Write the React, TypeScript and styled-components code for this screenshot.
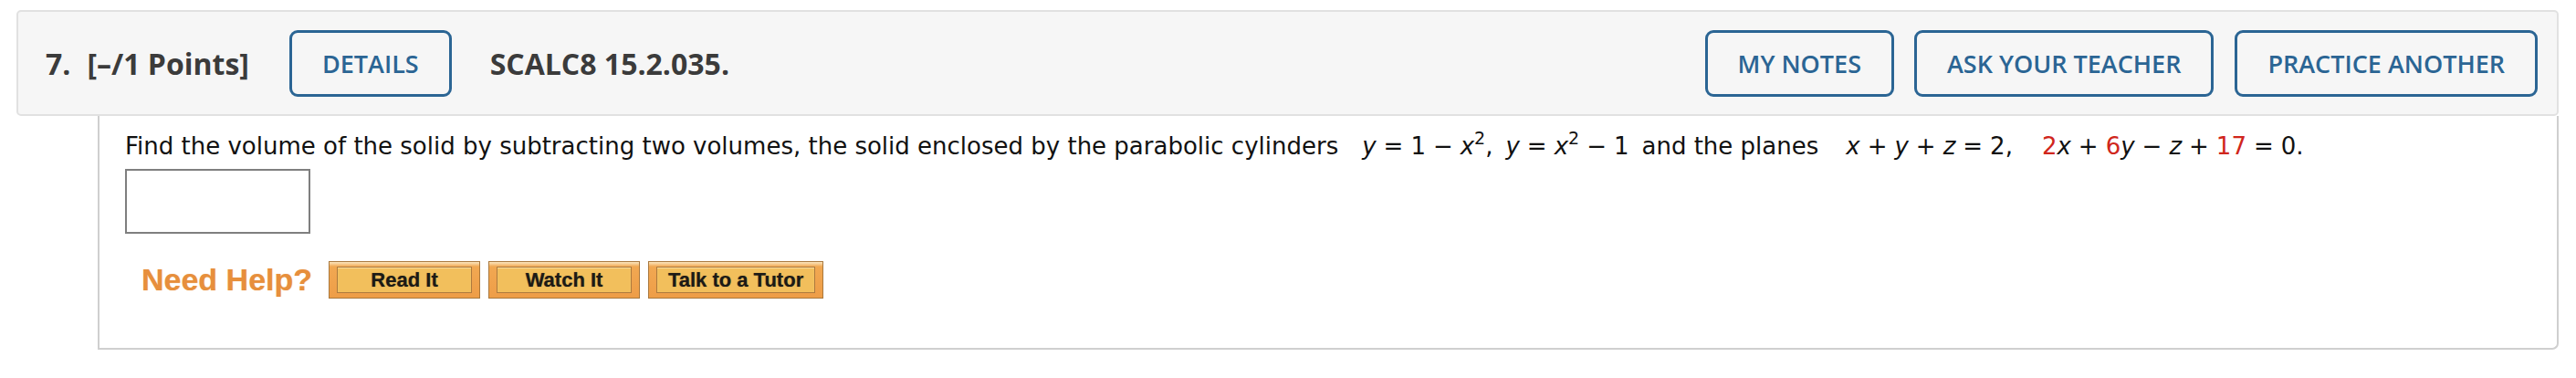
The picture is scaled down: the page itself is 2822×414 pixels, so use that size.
import React from "react";
import styled, {createGlobalStyle} from "styled-components";

const GlobalStyle = createGlobalStyle`
  html, body {
    margin: 0;
    padding: 0;
    background: #ffffff;
  }
  body {
    font-family: "Open Sans", "Liberation Sans", sans-serif;
  }
`;

const Page = styled.div`
  padding: 11px 19px 0 18px;
`;

const Header = styled.div`
  display: flex;
  align-items: center;
  justify-content: space-between;
  height: 116px;
  box-sizing: border-box;
  padding: 0 21px 0 30px;
  background: #f6f6f6;
  border: 2px solid #e1e1e1;
  border-radius: 5px;
`;

const HeaderGroup = styled.div`
  display: flex;
  align-items: center;
`;

const QNum = styled.span`
  font-size: 32px;
  font-weight: 700;
  color: #3b3b3b;
  margin-right: 18px;
`;

const Points = styled.span`
  font-size: 32px;
  font-weight: 700;
  color: #3b3b3b;
  margin-right: 44px;
`;

const Source = styled.span`
  font-size: 32px;
  font-weight: 700;
  color: #3b3b3b;
  margin-left: 42px;
`;

const OutlineButton = styled.button<{ $gap?: number }>`
  height: 73px;
  box-sizing: border-box;
  padding: 0 33px;
  margin-left: ${p => p.$gap ?? 0}px;
  background: transparent;
  border: 3px solid #2b6594;
  border-radius: 9px;
  font-family: "Open Sans", "Liberation Sans", sans-serif;
  font-size: 27px;
  font-weight: 600;
  color: #2b6594;
  cursor: pointer;
`;

const Body = styled.div`
  margin-left: 89px;
  height: 256px;
  box-sizing: border-box;
  padding: 14px 28px 0;
  border: 2px solid #cfcfcf;
  border-top: none;
  border-radius: 0 0 7px 0;
  font-family: "DejaVu Sans", Verdana, sans-serif;
  font-size: 26px;
  color: #111111;
`;

const Question = styled.div`
  line-height: 38px;
  white-space: nowrap;
`;

const MathPart = styled.span<{ $gapLeft?: number }>`
  margin-left: ${p => p.$gapLeft ?? 0}px;
`;

const Var = styled.i`
  font-style: italic;
`;

const Op = styled.span`
  margin: 0 8px;
`;

const Red = styled.span`
  color: #d0261c;
`;

const Sup = styled.sup`
  font-size: 19px;
  line-height: 0;
  vertical-align: 11px;
`;

const AnswerBox = styled.input`
  display: block;
  width: 203px;
  height: 71px;
  box-sizing: border-box;
  margin-top: 6px;
  border: 2px solid #7f7f7f;
  background: #ffffff;
  outline: none;
`;

const HelpRow = styled.div`
  display: flex;
  align-items: center;
  margin-top: 30px;
  padding-left: 18px;
`;

const NeedHelp = styled.span`
  font-family: "Liberation Sans", Arial, sans-serif;
  font-size: 34px;
  font-weight: 700;
  color: #e78f3c;
  margin-right: 18px;
  text-shadow: 0 0 1px rgba(231, 143, 60, 0.6);
`;

const HelpButton = styled.span<{ $w: number }>`
  display: flex;
  width: ${p => p.$w}px;
  height: 41px;
  box-sizing: border-box;
  padding: 5px 8px;
  margin-right: 9px;
  border: 1px solid #a9783d;
  background: linear-gradient(#fce7c0 0, #f1a852 5px, #ee9d47 100%);
`;

const HelpInner = styled.span`
  flex: 1;
  display: flex;
  align-items: center;
  justify-content: center;
  border: 1px solid #ad7a3e;
  background: #f2bf5c;
  box-shadow: inset 0 1px 1px rgba(255, 240, 200, 0.6);
  font-family: "Liberation Sans", Arial, sans-serif;
  font-size: 22px;
  font-weight: 700;
  color: #1c1a16;
  text-shadow: 0 0 1px rgba(0, 0, 0, 0.5);
`;

export default function App() {
    return (
        <Page>
            <GlobalStyle/>
            <Header>
                <HeaderGroup>
                    <QNum>7.</QNum>
                    <Points>[–/1 Points]</Points>
                    <OutlineButton>DETAILS</OutlineButton>
                    <Source>SCALC8 15.2.035.</Source>
                </HeaderGroup>
                <HeaderGroup>
                    <OutlineButton>MY NOTES</OutlineButton>
                    <OutlineButton $gap={22}>ASK YOUR TEACHER</OutlineButton>
                    <OutlineButton $gap={23}>PRACTICE ANOTHER</OutlineButton>
                </HeaderGroup>
            </Header>
            <Body>
                <Question>
                    Find the volume of the solid by subtracting two volumes, the solid enclosed by the parabolic cylinders
                    <MathPart $gapLeft={26}>
                        <Var>y</Var><Op>=</Op>1<Op>−</Op><Var>x</Var><Sup>2</Sup>,<MathPart $gapLeft={14}><Var>y</Var></MathPart><Op>=</Op><Var>x</Var><Sup>2</Sup><Op>−</Op>1
                    </MathPart>
                    <MathPart $gapLeft={14}>and the planes</MathPart>
                    <MathPart $gapLeft={30}>
                        <Var>x</Var><Op>+</Op><Var>y</Var><Op>+</Op><Var>z</Var><Op>=</Op>2,
                    </MathPart>
                    <MathPart $gapLeft={32}>
                        <Red>2</Red><Var>x</Var><Op>+</Op><Red>6</Red><Var>y</Var><Op>−</Op><Var>z</Var><Op>+</Op><Red>17</Red><Op>=</Op>0.
                    </MathPart>
                </Question>
                <AnswerBox type="text"/>
                <HelpRow>
                    <NeedHelp>Need Help?</NeedHelp>
                    <HelpButton $w={166}><HelpInner>Read It</HelpInner></HelpButton>
                    <HelpButton $w={166}><HelpInner>Watch It</HelpInner></HelpButton>
                    <HelpButton $w={192}><HelpInner>Talk to a Tutor</HelpInner></HelpButton>
                </HelpRow>
            </Body>
        </Page>
    );
}
